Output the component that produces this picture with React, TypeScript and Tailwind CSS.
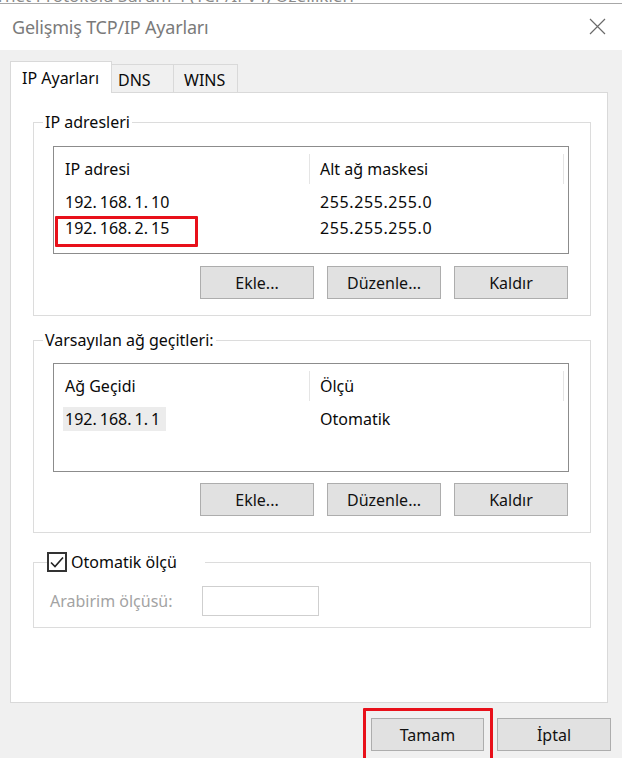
import React from 'react';

const font = "font-['Segoe_UI','Noto_Sans',sans-serif]";

function IpText({ value }: { value: string }) {
  const parts = value.split('.');
  return (
    <span className="inline-flex">
      {parts.map((p, i) => (
        <span key={i}>
          {p}
          {i < parts.length - 1 && <span className="mr-[3px]">.</span>}
        </span>
      ))}
    </span>
  );
}

function Button({ label, w = 'w-[114px]' }: { label: string; w?: string }) {
  return (
    <div
      className={`${w} h-[33px] bg-[#e1e1e1] border border-[#adadad] flex items-center justify-center text-[16px] text-[#111]`}
    >
      {label}
    </div>
  );
}

type Row = { left: React.ReactNode; right: React.ReactNode; selected?: boolean };

function ListBox({ headers, rows, h }: { headers: [string, string]; rows: Row[]; h: string }) {
  return (
    <div className={`ml-[19px] w-[516px] ${h} bg-white border border-[#8c8c8c]`}>
      <div className="flex h-[41px] pt-[3px]">
        <div className="w-[256px] pl-[11px] flex items-center border-r border-[#e5e5e5] my-[4px]">
          {headers[0]}
        </div>
        <div className="flex-1 pl-[10px] flex items-center border-r border-[#e5e5e5] mr-[4px] my-[4px]">
          {headers[1]}
        </div>
      </div>
      {rows.map((r, i) => (
        <div key={i} className="flex h-[26px] items-center pt-[2px]">
          <div className="w-[256px] pl-[9px] h-full flex items-center">
            <span
              className={`h-full flex items-center px-[2px] ${r.selected ? 'bg-[#ececec] pr-[6px]' : ''}`}
            >
              {r.left}
            </span>
          </div>
          <div className="flex-1 pl-[10px]">{r.right}</div>
        </div>
      ))}
    </div>
  );
}

function Group({
  legend,
  h,
  legendClass = 'ml-[9px] px-[2px]',
  children,
}: {
  legend: React.ReactNode;
  h: string;
  legendClass?: string;
  children: React.ReactNode;
}) {
  return (
    <fieldset className={`ml-[22px] w-[558px] ${h} border border-[#dcdcdc]`}>
      <legend className={`${legendClass} h-[20px] leading-[20px]`}>{legend}</legend>
      {children}
    </fieldset>
  );
}

const mask = <span className="tracking-[0.6px]">255.255.255.0</span>;

export default function App() {
  return (
    <div
      className={`${font} relative w-[622px] h-[758px] overflow-hidden bg-[#f0f0f0] text-[16px] text-[#0a0a0a]`}
    >
      {/* edge of the parent window peeking out above */}
      <div className="h-[4px] bg-white border-b border-[#a8a8a8] overflow-hidden">
        <div className="-mt-[17px] -ml-[34px] text-[17px] text-[#8a8a8a] whitespace-nowrap">
          İnternet Protokolü Sürüm 4 (TCP/IPv4) Özellikleri
        </div>
      </div>

      {/* title bar */}
      <div className="h-[46px] bg-white flex items-center justify-between pl-[12px] pr-[16px]">
        <span className="text-[18px] text-[#7a7a7a] tracking-[-0.2px]">Gelişmiş TCP/IP Ayarları</span>
        <svg width="17" height="17" viewBox="0 0 17 17" className="mb-[1px]">
          <path d="M1 1 L16 16 M16 1 L1 16" stroke="#6a6a6a" strokeWidth="1.2" fill="none" />
        </svg>
      </div>

      <div className="pl-[10px] pr-[14px] pt-[11px]">
        {/* tabs */}
        <div className="flex items-end h-[32px] relative z-10">
          <div className="w-[102px] h-[32px] bg-white border border-b-0 border-[#d9d9d9] pl-[11px] pt-[4px]">
            IP Ayarları
          </div>
          <div className="w-[62px] h-[29px] border border-l-0 border-b-0 border-[#d9d9d9] pl-[6px] pt-[3px]">
            DNS
          </div>
          <div className="w-[64px] h-[29px] border border-l-0 border-b-0 border-[#d9d9d9] pl-[10px] pt-[3px]">
            WINS
          </div>
        </div>

        {/* tab page */}
        <div className="-mt-px h-[611px] bg-white border border-[#d9d9d9] pt-[19px]">
          <Group legend="IP adresleri" h="h-[204px]">
            <div className="h-[14px]" />
            <ListBox
              headers={['IP adresi', 'Alt ağ maskesi']}
              h="h-[108px]"
              rows={[
                { left: <IpText value="192.168.1.10" />, right: mask },
                { left: <IpText value="192.168.2.15" />, right: mask },
              ]}
            />
            <div className="flex justify-end gap-[13px] pr-[22px] mt-[12px]">
              <Button label="Ekle..." />
              <Button label="Düzenle..." />
              <Button label="Kaldır" />
            </div>
          </Group>

          <div className="h-[14px]" />
          <Group legend="Varsayılan ağ geçitleri:" h="h-[203px]">
            <div className="h-[13px]" />
            <ListBox
              headers={['Ağ Geçidi', 'Ölçü']}
              h="h-[109px]"
              rows={[{ left: <IpText value="192.168.1.1" />, right: 'Otomatik', selected: true }]}
            />
            <div className="flex justify-end gap-[13px] pr-[22px] mt-[11px]">
              <Button label="Ekle..." />
              <Button label="Düzenle..." />
              <Button label="Kaldır" />
            </div>
          </Group>

          <div className="h-[19px]" />
          <Group
            h="h-[76px]"
            legendClass="ml-[13px] pr-[28px]"
            legend={
              <span className="flex items-center gap-[4px]">
                <span className="w-[20px] h-[20px] border-2 border-[#333] flex items-center justify-center">
                  <svg width="14" height="12" viewBox="0 0 14 12">
                    <path d="M1 6.5 L5 10.5 L13 1.5" stroke="#222" strokeWidth="1.6" fill="none" />
                  </svg>
                </span>
                <span>Otomatik ölçü</span>
              </span>
            }
          >
            <div className="flex items-center mt-[14px] pl-[16px]">
              <span className="w-[152px] text-[#a3a3a3]">Arabirim ölçüsü:</span>
              <div className="w-[117px] h-[30px] border border-[#cfcfcf] bg-white" />
            </div>
          </Group>
        </div>

        {/* dialog buttons */}
        <div className="flex justify-end gap-[13px] mt-[15px] -mr-[3px]">
          <Button label="Tamam" w="w-[113px]" />
          <Button label="İptal" />
        </div>
      </div>

      {/* red highlight marks */}
      <div className="absolute left-[55px] top-[216px] w-[143px] h-[31px] border-[3px] border-[#e8101a] rounded-[1px]" />
      <div className="absolute left-[363px] top-[708px] w-[130px] h-[54px] border-[3px] border-[#e8101a] rounded-[1px]" />
    </div>
  );
}
